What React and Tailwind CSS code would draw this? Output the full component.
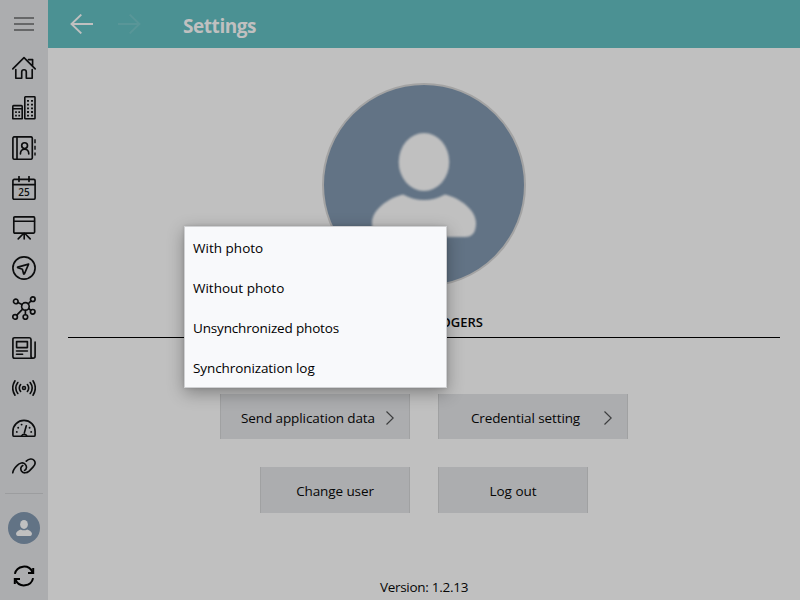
const I = ({ children, w = 1.65, className = '' }) => (
  <svg
    viewBox="0 0 24 24"
    className={`h-6 w-6 ${className}`}
    fill="none"
    stroke="#0c0d0e"
    strokeWidth={w}
    strokeLinecap="round"
    strokeLinejoin="round"
  >
    {children}
  </svg>
);

const Home = () => (
  <I>
    <path d="M0.8 12.8 12 1.6 23.2 12.8M3.8 13.5V22.2H9.7V16a2.3 2.3 0 0 1 4.6 0V22.2H20.2V13.5M16.5 3.6H20.6V9.6" />
  </I>
);

const Buildings = () => (
  <I w={1.6}>
    <rect x="12.8" y="0.8" width="10.2" height="22" rx="0.6" />
    <path d="M0.8 22.8V10.4Q0.8 9.6 1.6 9.6H9.4Q10.2 9.6 10.2 10.4V22.8ZM0.8 12.8H10.2" />
    <path d="M16 4V20.5M20 4V20.5" strokeLinecap="butt" strokeWidth="1.9" strokeDasharray="1.8 1.9" />
    <path d="M4 15.2V21.4M7.2 15.2V21.4" strokeLinecap="butt" strokeWidth="1.7" strokeDasharray="1.8 1.8" />
  </I>
);

const Contacts = () => (
  <I>
    <rect x="0.9" y="0.8" width="19.4" height="22.4" rx="1.4" />
    <path d="M5 0.8V23.2" />
    <circle cx="12.6" cy="9.6" r="2.9" />
    <path d="M8.4 18C8.4 14.8 10 13.2 12.6 13.2S16.8 14.8 16.8 18" />
    <path d="M23 3.2V7.2M23 9.8V13.8M23 16.4V19.4" strokeLinecap="butt" stroke="#2c2d2e" strokeWidth="1.8" />
  </I>
);

const Calendar = () => (
  <I>
    <rect x="0.9" y="3.4" width="22.2" height="19.8" rx="1.3" />
    <path d="M1 8.6H23M7 0.6V5.4M17 0.6V5.4" />
    <text
      x="12"
      y="20"
      textAnchor="middle"
      fill="#0c0d0e"
      stroke="none"
      className="font-['Open_Sans',sans-serif] text-[10px] font-semibold"
    >
      25
    </text>
  </I>
);

const Board = () => (
  <I>
    <rect x="1.8" y="0.9" width="20.8" height="16.2" rx="1" />
    <path d="M2 5.2H22.4M12.2 17.4V23M11 18 6.2 22.8M13.4 18 18.2 22.8" />
  </I>
);

const Navigate = () => (
  <I>
    <circle cx="12" cy="12" r="11.1" />
    <path d="M16.6 8.1 5.8 11.1Q5.2 11.4 5.9 11.8L10.4 13.2 11.6 17.8Q11.9 18.4 12.4 17.8Z" />
  </I>
);

const Network = () => (
  <I>
    <circle cx="13.4" cy="10.4" r="3.8" />
    <circle cx="3.8" cy="5.4" r="2.3" />
    <circle cx="20.8" cy="3.2" r="2.3" />
    <circle cx="20.7" cy="15.8" r="2.3" />
    <circle cx="13.4" cy="21" r="2.3" />
    <circle cx="3.1" cy="20.9" r="2.3" />
    <path d="M5.9 6.5 10 8.6M16.3 7.8 19 4.9M16.7 12.3 18.8 14.4M13.4 14.4V18.5M10.6 13.1 4.8 19.1" />
  </I>
);

const News = () => (
  <I>
    <path d="M20.2 22.2H2.5Q0.9 22.2 0.9 20.6V3.4Q0.9 1.7 2.5 1.7H17.4Q19 1.7 19 3.4V20.3Q19.2 22.2 21 22.2 23.1 22.2 23.1 20.3V6" />
    <rect x="4.6" y="5.6" width="10.8" height="6" />
    <path d="M4.5 15H15.4M4.5 18.2H10.6" />
  </I>
);

const Signal = () => (
  <I w={1.6}>
    <circle cx="12" cy="12" r="1.5" />
    <path d="M8.6 8.6Q6 12 8.6 15.4M5.8 6.5Q1.8 12 5.8 17.5M3 4.8Q-1.6 12 3 19.2M15.4 8.6Q18 12 15.4 15.4M18.2 6.5Q22.2 12 18.2 17.5M21 4.8Q25.6 12 21 19.2" />
  </I>
);

const Gauge = () => (
  <I>
    <path d="M1.6 20.2Q0.9 20.2 0.9 19V15.4A11.1 11.1 0 0 1 23.1 15.4V19Q23.1 20.2 22.4 20.2Z" />
    <path d="M9.6 20A2.8 2.8 0 0 1 14.8 20M12.4 16.6 14.3 9.8" />
    <path d="M4.8 15.9h.01M6.2 11.8h.01M9.6 8.6h.01M17.6 11.8h.01M19.2 15.9h.01" strokeWidth="1.9" />
  </I>
);

const Link = () => (
  <I>
    <path d="M0.8 16.8C0.9 14 2.6 12 5 9.6 7.6 6.8 11.2 6 13.2 8.2 15 10.2 15 13 12.6 14.4M14.3 5.2C17 2.6 20.4 2.2 22.2 4.4 24 6.7 22.8 9.2 21 11.1L17.4 14.8C14.6 17.5 11.2 17.3 9.6 15.2 8.2 13.2 8.7 10.6 10.8 9.6" />
  </I>
);

const Sync = () => (
  <svg viewBox="0 0 24 24" className="h-6 w-6" fill="none" stroke="#000" strokeWidth="2">
    <path d="M2.9 9.9A9.3 9.3 0 0 1 20.4 8M21.1 14.1A9.3 9.3 0 0 1 3.6 16" />
    <path d="M21.2 4V9H16M2.8 20V15H8" />
  </svg>
);

const Person = ({ className }) => (
  <svg viewBox="0 0 104 104" className={className} fill="#c0c0c0">
    <ellipse cx="52" cy="29" rx="25.3" ry="29" />
    <path d="M31 61.5Q52 72.5 73 61.5C88 65 104 77 104 90Q104 104 93 104H11Q0 104 0 90C0 77 16 65 31 61.5Z" />
  </svg>
);

const nav = [Home, Buildings, Contacts, Calendar, Board, Navigate, Network, News, Signal, Gauge, Link];

const menu = [
  ['With photo', 'tracking-[0.02px]'],
  ['Without photo', 'tracking-[0px]'],
  ['Unsynchronized photos', 'tracking-[-0.16px]'],
  ['Synchronization log', 'tracking-[-0.09px]'],
];

const Button = ({ children, className }) => (
  <button className={`flex items-center justify-center border-x border-[#a0a1a2] bg-[#acadaf] ${className}`}>
    {children}
  </button>
);

const Chevron = () => (
  <svg viewBox="0 0 8 14" className="h-[14px] w-2" fill="none" stroke="#3c3d3e" strokeWidth="1.2">
    <path d="M0.5 0.5 7.2 7 0.5 13.5" />
  </svg>
);

export default function App() {
  return (
    <div className="relative flex h-[600px] w-[800px] overflow-hidden bg-[#c0c0c0] font-['Open_Sans','Noto_Sans',sans-serif] text-[13.5px] leading-5 text-[#060606]">
      <aside className="flex w-12 shrink-0 flex-col items-center bg-[#acadaf]">
        <div className="flex h-12 flex-col items-center justify-center gap-1">
          <span className="h-0.5 w-5 bg-[#666768]" />
          <span className="h-0.5 w-5 bg-[#666768]" />
          <span className="h-0.5 w-5 bg-[#666768]" />
        </div>
        <nav className="flex flex-col">
          {nav.map((Icon, i) => (
            <a key={i} className="flex h-10 items-center">
              <Icon />
            </a>
          ))}
        </nav>
        <div className="mt-[5px] h-px w-[38px] bg-[#9c9d9f]" />
        <div className="mt-[18px] flex h-8 w-8 items-center justify-center rounded-full bg-[#627385]">
          <Person className="h-4 w-4" />
        </div>
        <div className="mt-5">
          <Sync />
        </div>
      </aside>

      <div className="flex min-w-0 flex-1 flex-col">
        <header className="flex h-12 shrink-0 items-center bg-[#4b9193] pl-[22px]">
          <svg viewBox="0 0 24 20" className="h-5 w-6" fill="none" stroke="#c0c0c0" strokeWidth="1.9">
            <path d="M23 10H1.2M11.3 0.6 1.5 10 11.3 19.4" />
          </svg>
          <svg viewBox="0 0 24 20" className="ml-6 h-5 w-6" fill="none" stroke="#599698" strokeWidth="1.9">
            <path d="M0 10H21.8M11.7 0.6 21.5 10 11.7 19.4" />
          </svg>
          <h1 className="ml-[41px] pt-1 text-[19px] leading-6 font-bold tracking-[-0.45px] text-[#c0c0c0]">Settings</h1>
        </header>

        <main className="flex flex-1 flex-col px-5 pt-[35px]">
          <div className="flex h-[204px] w-[204px] flex-col items-center self-center rounded-full border-2 border-[#a3a3a3] bg-[#627385] pt-12">
            <Person className="h-[104px] w-[104px] blur-[1.3px]" />
          </div>
          <div className="mt-[25px] flex h-[26px] justify-end border-b border-black pr-[297px] text-[13px] font-semibold">
            ROGERS
          </div>
          <div className="mt-14 flex justify-center gap-7">
            <Button className="h-[45px] w-[190px] gap-[11px] pt-0.5 pl-[5px]">
              <span className="tracking-[-0.1px]">Send application data</span>
              <Chevron />
            </Button>
            <Button className="h-[45px] w-[190px] gap-6 pt-0.5 pl-[17px]">
              <span className="tracking-[-0.1px]">Credential setting</span>
              <Chevron />
            </Button>
          </div>
          <div className="mt-7 flex h-[46px] gap-7 pl-48">
            <Button className="w-[150px] pt-0.5 tracking-[-0.1px]">Change user</Button>
            <Button className="w-[150px] pt-0.5">Log out</Button>
          </div>
          <div className="mt-16 text-center tracking-[-0.28px]">Version: 1.2.13</div>
        </main>
      </div>

      <div className="absolute top-[226px] left-[184px] w-[263px] border border-[#cfd0d2] bg-[#f8f9fb] pt-px shadow-[0_5px_16px_rgba(0,0,0,0.32),0_0_3px_rgba(0,0,0,0.15)]">
        {menu.map(([label, tracking]) => (
          <div key={label} className={`flex h-10 items-center pl-2 text-black last:h-[39px] ${tracking}`}>
            {label}
          </div>
        ))}
      </div>
    </div>
  );
}
